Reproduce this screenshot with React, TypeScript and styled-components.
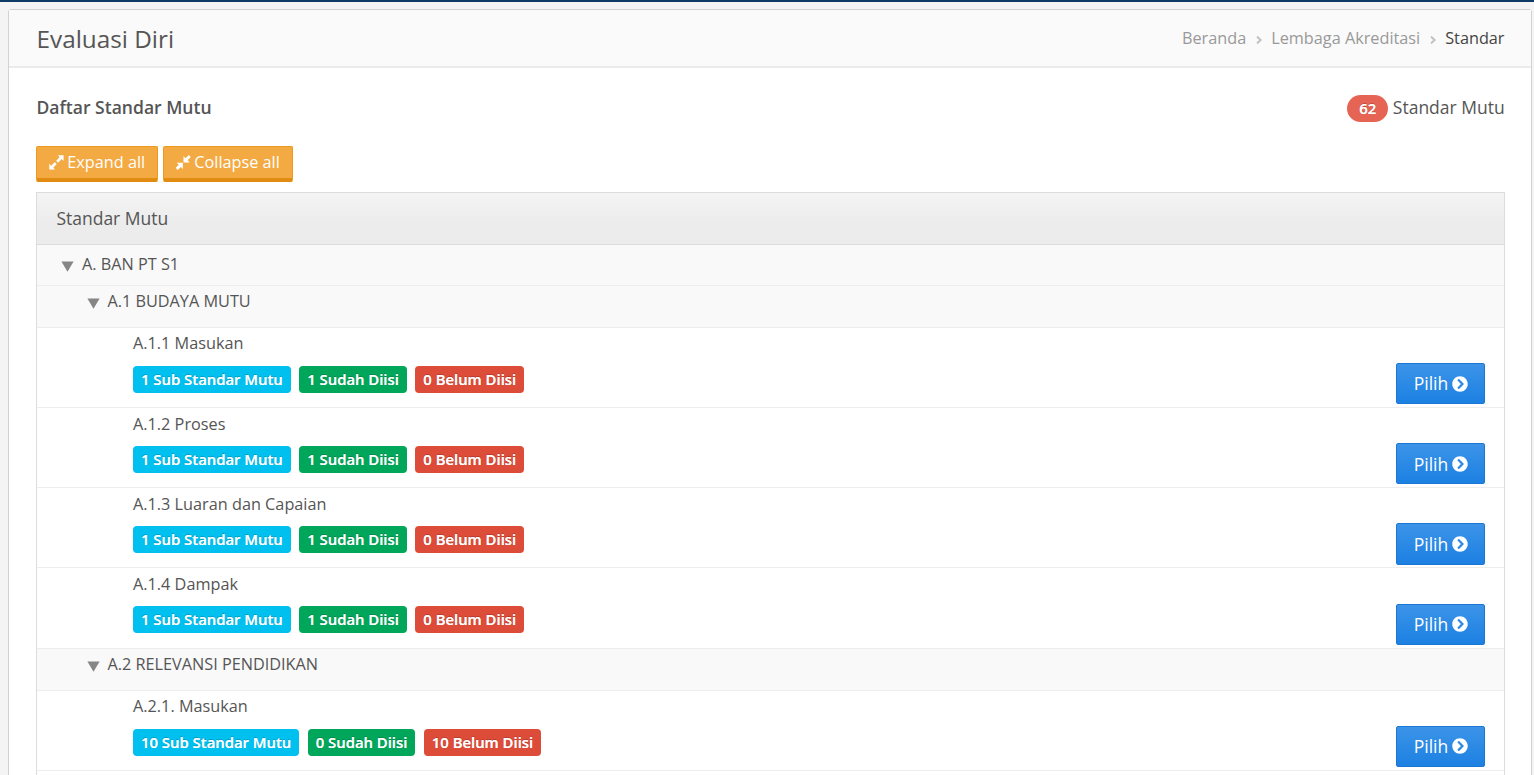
import React from "react";
import styled, { createGlobalStyle } from "styled-components";
import { FaChevronCircleRight } from "react-icons/fa";

const GlobalStyle = createGlobalStyle`
  * { box-sizing: border-box; }
  body {
    margin: 0;
    overflow: hidden;
    background: #f4f4f4;
    color: #555;
    font: 16.25px/25px "Open Sans", "Noto Sans", sans-serif;
  }
`;

const Page = styled.div`
  height: 775px;
  overflow: hidden;
  border-top: 2px solid #0d3b66;
  padding: 7px 2px 0 8px;
`;

const Card = styled.section`
  height: 800px;
  border: 1px solid #d2d2d2;
  border-radius: 3px 3px 0 0;
  background: #fff;
`;

const CardHeader = styled.header`
  display: flex;
  justify-content: space-between;
  height: 58px;
  padding: 0 26.5px 0 27.5px;
  background: #fafafa;
  border-bottom: 2px solid #ebebeb;
`;

const Title = styled.h1`
  margin: 0;
  font-size: 24.3px;
  line-height: 57.5px;
  font-weight: 400;
`;

const Crumbs = styled.nav`
  display: flex;
  align-items: center;
  height: 56px;
  color: #999;
`;

const Crumb = styled.span<{ $current?: boolean }>`
  color: ${(p) => (p.$current ? "#444" : "#999")};
`;

const CrumbArrow = styled.svg`
  width: 6px;
  height: 8px;
  margin: 3px 9px 0 10px;
`;

const Content = styled.div`
  padding: 25px 26px 0 27px;
`;

const Summary = styled.div`
  display: flex;
  justify-content: space-between;
  height: 30px;
  padding: 0 0.3px 0 0.5px;
  line-height: 29px;
  font-size: 17.5px;
`;

const SectionTitle = styled.h2`
  margin: 0;
  font-size: 17.55px;
  font-weight: 600;
`;

const Count = styled.div`
  display: flex;
  align-items: flex-start;
  gap: 4.7px;
`;

const CountBadge = styled.span`
  width: 41px;
  height: 27px;
  margin-top: 2px;
  border-radius: 14px;
  background: #e66454;
  color: #fff;
  font-size: 14.9px;
  font-weight: 600;
  line-height: 26px;
  text-align: center;
  text-shadow: 0 -1px 0 rgba(0, 0, 0, 0.2), 0 0 0.5px #fff;
`;

const Actions = styled.div`
  display: flex;
  gap: 5px;
  margin-top: 23px;
`;

const ActionButton = styled.button<{ $width: number }>`
  display: flex;
  align-items: center;
  gap: 3.3px;
  width: ${(p) => p.$width}px;
  height: 36px;
  padding: 0 0 1px 12px;
  white-space: nowrap;
  border: 1px solid #eb9a1c;
  border-bottom: 4px solid #e18b10;
  border-radius: 2px;
  background: #f4aa42;
  color: #fff;
  font: inherit;
`;

const ArrowIcon = styled.svg`
  width: 15px;
  height: 15px;
  flex: none;
  fill: #fff;
`;

const Table = styled.div`
  margin-top: 10px;
  border: 1px solid #dcdcdc;
`;

const TableHead = styled.div`
  height: 52px;
  padding-left: 19.4px;
  border-bottom: 1px solid #dcdcdc;
  background: linear-gradient(#f4f4f4, #ececec 60%, #ececec);
  font-size: 17.5px;
  line-height: 51px;
`;

const GroupRow = styled.div<{ $nested?: boolean }>`
  display: flex;
  align-items: flex-start;
  gap: ${(p) => (p.$nested ? 7.4 : 8)}px;
  height: ${(p) => (p.$nested ? 42 : 41.15)}px;
  padding: ${(p) => (p.$nested ? "3px 0 0 50px" : "7px 0 0 24px")};
  border-bottom: 1px solid #ededed;
  background: #f9f9f9;
`;

const Caret = styled.svg`
  width: 13px;
  height: 11px;
  margin-top: 9px;
  fill: #868686;
`;

const ItemRow = styled.div`
  display: flex;
  justify-content: space-between;
  height: 80.1px;
  padding: 3.32px 19px 0 96px;
  border-bottom: 1px solid #ededed;
`;

const Labels = styled.div`
  display: flex;
  gap: 8.4px;
  margin-top: 9.68px;
`;

const Label = styled.span<{ $color: string }>`
  height: 27px;
  padding: 0 8px;
  border-radius: 4px;
  background: ${(p) => p.$color};
  color: #fff;
  font-size: 14.86px;
  font-weight: 600;
  line-height: 27px;
  white-space: nowrap;
  text-shadow: 0 -1px 0 rgba(0, 0, 0, 0.2), 0 0 0.5px #fff;
`;

const PickButton = styled.button`
  display: flex;
  align-items: center;
  justify-content: center;
  gap: 4px;
  width: 89px;
  height: 41.15px;
  margin-top: 31.8px;
  padding: 0.2px 0 0 1px;
  border: 1px solid #1c77d4;
  border-radius: 2px;
  background: linear-gradient(#3c94e8, #1c80e2);
  color: #fff;
  font: inherit;
  font-size: 17.5px;
`;

type Item = { name: string; counts: [number, number, number] };
type Group = { name: string; items: Item[] };

const groups: Group[] = [
  {
    name: "A.1 BUDAYA MUTU",
    items: [
      { name: "A.1.1 Masukan", counts: [1, 1, 0] },
      { name: "A.1.2 Proses", counts: [1, 1, 0] },
      { name: "A.1.3 Luaran dan Capaian", counts: [1, 1, 0] },
      { name: "A.1.4 Dampak", counts: [1, 1, 0] },
    ],
  },
  {
    name: "A.2 RELEVANSI PENDIDIKAN",
    items: [{ name: "A.2.1. Masukan", counts: [10, 0, 10] }],
  },
];

const Separator = () => (
  <CrumbArrow viewBox="0 0 6 8">
    <path d="M1 .6 4.6 4 1 7.4" fill="none" stroke="#c0c0c0" strokeWidth="2" />
  </CrumbArrow>
);

const Down = () => (
  <Caret viewBox="0 0 13 11">
    <path d="M.4.5h12.2L6.5 10.8Z" />
  </Caret>
);

const Standard = ({ item }: { item: Item }) => (
  <ItemRow>
    <div>
      <div>{item.name}</div>
      <Labels>
        <Label $color="#00c0ef">{item.counts[0]} Sub Standar Mutu</Label>
        <Label $color="#00a65a">{item.counts[1]} Sudah Diisi</Label>
        <Label $color="#dd4b39">{item.counts[2]} Belum Diisi</Label>
      </Labels>
    </div>
    <PickButton>
      Pilih <FaChevronCircleRight size={16} />
    </PickButton>
  </ItemRow>
);

export default function App() {
  return (
    <Page>
      <GlobalStyle />
      <Card>
        <CardHeader>
          <Title>Evaluasi Diri</Title>
          <Crumbs>
            <Crumb>Beranda</Crumb>
            <Separator />
            <Crumb>Lembaga Akreditasi</Crumb>
            <Separator />
            <Crumb $current>Standar</Crumb>
          </Crumbs>
        </CardHeader>
        <Content>
          <Summary>
            <SectionTitle>Daftar Standar Mutu</SectionTitle>
            <Count>
              <CountBadge>62</CountBadge>
              <span>Standar Mutu</span>
            </Count>
          </Summary>
          <Actions>
            <ActionButton $width={122}>
              <ArrowIcon viewBox="0 0 15 15">
                <path
                  d="M8.8.2h5.8V6l-1.9-1.9-3.6 3.6-1.9-1.9 3.5-3.7ZM6.1 14.6H.3V8.8l1.9 1.9 3.6-3.6 1.9 1.9L4.2 12.7Z"
                />
              </ArrowIcon>
              Expand all
            </ActionButton>
            <ActionButton $width={130}>
              <ArrowIcon viewBox="0 0 15 15">
                <path
                  d="M7.5 7.4V1.2l2.1 2L12.8.1l2 2-3.1 3.2 2 2.1ZM6.9 7.7v6.2l-2.1-2-3.1 3-2-2 3.1-3.1-2.1-2.1Z"
                />
              </ArrowIcon>
              Collapse all
            </ActionButton>
          </Actions>
          <Table>
            <TableHead>Standar Mutu</TableHead>
            <GroupRow>
              <Down />
              A. BAN PT S1
            </GroupRow>
            {groups.map((group) => (
              <React.Fragment key={group.name}>
                <GroupRow $nested>
                  <Down />
                  {group.name}
                </GroupRow>
                {group.items.map((item) => (
                  <Standard key={item.name} item={item} />
                ))}
              </React.Fragment>
            ))}
            <ItemRow />
          </Table>
        </Content>
      </Card>
    </Page>
  );
}
